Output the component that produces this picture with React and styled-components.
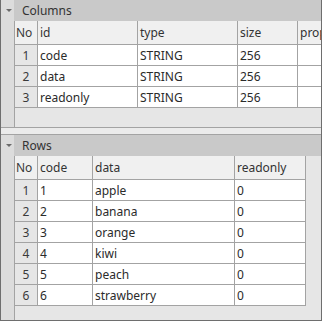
import React from "react";
import styled, { createGlobalStyle } from "styled-components";

const GlobalStyle = createGlobalStyle`
  html, body {
    margin: 0;
    padding: 0;
    background: #ffffff;
  }
  body {
    font-family: "Noto Sans", "Liberation Sans", sans-serif;
    font-size: 12px;
    color: #2b2b2b;
  }
`;

const columnsCols = [
  { key: "id", label: "id", width: 100 },
  { key: "type", label: "type", width: 100 },
  { key: "size", label: "size", width: 60 },
  { key: "prop", label: "properties", width: 90 },
];

const columnsData = [
  { id: "code", type: "STRING", size: "256", prop: "" },
  { id: "data", type: "STRING", size: "256", prop: "" },
  { id: "readonly", type: "STRING", size: "256", prop: "" },
];

const rowsCols = [
  { key: "code", label: "code", width: 55 },
  { key: "data", label: "data", width: 142 },
  { key: "readonly", label: "readonly", width: 71 },
];

const rowsData = [
  { code: "1", data: "apple", readonly: "0" },
  { code: "2", data: "banana", readonly: "0" },
  { code: "3", data: "orange", readonly: "0" },
  { code: "4", data: "kiwi", readonly: "0" },
  { code: "5", data: "peach", readonly: "0" },
  { code: "6", data: "strawberry", readonly: "0" },
];

function App() {
  return (
    <>
      <GlobalStyle />
      <Frame>
        <Panel $height={128} $bottomLine>
          <Gutter>
            <Toggle />
          </Gutter>
          <Content>
            <Title>Columns</Title>
            <Grid cols={columnsCols} data={columnsData} headHeight={24} />
          </Content>
        </Panel>
        <Splitter />
        <Panel $grow $topLine>
          <Gutter>
            <Toggle />
          </Gutter>
          <Content>
            <Title>Rows</Title>
            <Grid cols={rowsCols} data={rowsData} headHeight={24} />
          </Content>
        </Panel>
      </Frame>
    </>
  );
}

function Grid({ cols, data, headHeight }) {
  return (
    <GridArea>
      <Row $height={headHeight}>
        <NoCell $head>No</NoCell>
        {cols.map((c) => (
          <HeadCell key={c.key} $width={c.width}>
            {c.label}
          </HeadCell>
        ))}
      </Row>
      {data.map((row, i) => (
        <Row key={i} $height={21}>
          <NoCell>{i + 1}</NoCell>
          {cols.map((c) => (
            <Cell key={c.key} $width={c.width}>
              {row[c.key]}
            </Cell>
          ))}
        </Row>
      ))}
    </GridArea>
  );
}

const Frame = styled.div`
  width: 322px;
  height: 321px;
  box-sizing: border-box;
  border-left: 1px solid #6e6e6e;
  border-right: 1px solid #6e6e6e;
  border-bottom: 1px solid #6e6e6e;
  background: #ebebeb;
  display: flex;
  flex-direction: column;
  overflow: hidden;
`;

const Panel = styled.div`
  display: flex;
  flex: ${(p) => (p.$grow ? "1" : "none")};
  height: ${(p) => (p.$height ? `${p.$height}px` : "auto")};
  box-sizing: border-box;
  border-bottom: ${(p) => (p.$bottomLine ? "1px solid #a3a3a3" : "none")};
  border-top: ${(p) => (p.$topLine ? "1px solid #a3a3a3" : "none")};
  background: #e6e6e6;
  min-height: 0;
`;

const Splitter = styled.div`
  height: 6px;
  background: #ebebeb;
`;

const Gutter = styled.div`
  width: 13px;
  flex: none;
  background: #dcdcdc;
  border-right: 1px solid #a3a3a3;
  display: flex;
  justify-content: center;
  padding-top: 9px;
  box-sizing: content-box;
`;

const Toggle = styled.span`
  width: 0;
  height: 0;
  border-left: 3px solid transparent;
  border-right: 3px solid transparent;
  border-top: 3px solid #6a6a6a;
  margin-left: 2px;
`;

const Content = styled.div`
  flex: 1;
  min-width: 0;
  display: flex;
  flex-direction: column;
  margin-left: -1px;
  overflow: hidden;
`;

const Title = styled.div`
  height: 21px;
  flex: none;
  background: #c9c9c9;
  padding-left: 8px;
  display: flex;
  align-items: center;
  color: #333;
`;

const GridArea = styled.div`
  display: flex;
  flex-direction: column;
  padding-left: 1px;
`;

const Row = styled.div`
  display: flex;
  height: ${(p) => p.$height}px;
  flex: none;
`;

const BaseCell = styled.div`
  box-sizing: border-box;
  border-right: 1px solid #a3a3a3;
  border-bottom: 1px solid #a3a3a3;
  display: flex;
  align-items: center;
  white-space: nowrap;
  overflow: hidden;
  flex: none;
`;

const NoCell = styled(BaseCell)`
  width: 23px;
  background: ${(p) => (p.$head ? "#f0f0f0" : "#e6e6e6")};
  justify-content: ${(p) => (p.$head ? "flex-start" : "center")};
  padding-left: ${(p) => (p.$head ? "1px" : "0")};
  color: #3a3a3a;
`;

const HeadCell = styled(BaseCell)`
  width: ${(p) => p.$width}px;
  background: #f0f0f0;
  padding-left: 2px;
  color: #333;
`;

const Cell = styled(BaseCell)`
  width: ${(p) => p.$width}px;
  background: #ffffff;
  padding-left: 2px;
  color: #2b2b2b;
`;

export default App;
